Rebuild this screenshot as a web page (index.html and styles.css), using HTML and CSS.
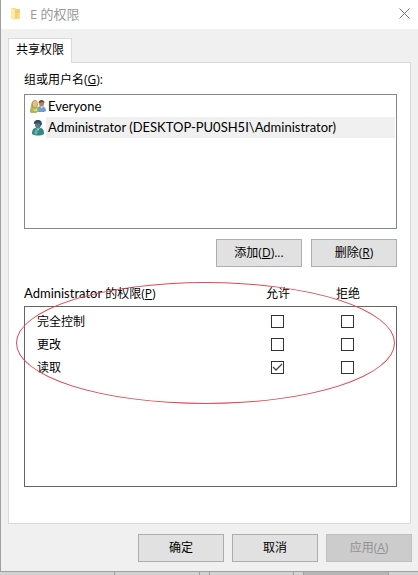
FILE: index.html
```html
<!DOCTYPE html>
<html lang="zh-CN">
<head>
    <meta charset="UTF-8">
    <meta name="viewport" content="width=device-width, initial-scale=1.0">
    <title>E 的权限</title>
    <link rel="stylesheet" href="styles.css">
</head>
<body>
    <main class="dialog">
        <header class="titlebar">
            <svg class="folder-icon" viewBox="0 0 10 13" aria-hidden="true">
                <path d="M0 1h4l1 1h4v10H0z" fill="#f3ce72"/>
                <path d="M0 1l4 1v11l-4-1z" fill="#ffe9a6"/>
                <path d="M7 6l2 1v5H6z" fill="#f8dc8e"/>
            </svg>
            <h1 class="title">E 的权限</h1>
            <button class="close" type="button" aria-label="关闭">
                <svg viewBox="0 0 11 11" aria-hidden="true">
                    <path d="M.5.5l10 10M10.5.5l-10 10" fill="none" stroke="#777"/>
                </svg>
            </button>
        </header>

        <div class="content">
            <div class="tabs" role="tablist">
                <button class="tab" type="button" role="tab" aria-selected="true">共享权限</button>
            </div>

            <section class="panel" role="tabpanel">
                <h2 class="label" id="users-label">组或用户名(<u>G</u>):</h2>
                <ul class="users" role="listbox" aria-labelledby="users-label">
                    <li class="user" role="option" aria-selected="false">
                        <svg class="user-icon" viewBox="0 0 16 16" aria-hidden="true">
                            <path d="M7 13c0-4 1-6 4-6s5 2 5 5l-2 1z" fill="#6f9fce"/>
                            <path d="M10 7h3l-1 3z" fill="#dcebf5"/>
                            <ellipse cx="11.5" cy="4.5" rx="2.5" ry="3" fill="#b88262"/>
                            <path d="M8.500 4c0-4 6-4 6 0l-2-1z" fill="#66493a"/>
                            <path d="M0 13c0-4 1-6 4-6s5 2 5 5l-3 2-5 0z" fill="#a9b957"/>
                            <path d="M1 8c0-9 7-9 7-2l-1 3H2z" fill="#c4a04c"/>
                            <ellipse cx="5" cy="5" rx="2" ry="3" fill="#e7bd93"/>
                            <path d="M3 9l2 2 2-2v3H4z" fill="#dbe1a0"/>
                        </svg>
                        <span class="user-name latin">Everyone</span>
                    </li>
                    <li class="user selected" role="option" aria-selected="true">
                        <svg class="user-icon" viewBox="0 0 16 16" aria-hidden="true">
                            <path d="M2 14c0-4 1-6 4-6h4c3 0 4 2 4 6-3 2-9 2-12 0z" fill="#2e8b86"/>
                            <path d="M4 13l2-4 2 3-2 3z" fill="#65b4ac"/>
                            <path d="M6 8h4l-2 3z" fill="#9fcfcb"/>
                            <ellipse cx="8" cy="4.500" rx="3" ry="4" fill="#587c87"/>
                            <path d="M4 4c-1-5 8-6 8 0l-1 2-2-3z" fill="#344f5b"/>
                        </svg>
                        <span class="user-name latin">Administrator (DESKTOP-PU0SH5I\Administrator)</span>
                    </li>
                </ul>

                <div class="actions">
                    <button class="btn" type="button">添加(<u>D</u>)...</button>
                    <button class="btn" type="button">删除(<u>R</u>)</button>
                </div>

                <div class="permissions">
                    <table class="permission-table">
                        <thead>
                            <tr>
                                <th scope="col"><span class="latin">Administrator</span> 的权限(<u>P</u>)</th>
                                <th scope="col">允许</th>
                                <th scope="col">拒绝</th>
                            </tr>
                        </thead>
                        <tbody>
                            <tr>
                                <th scope="row">完全控制</th>
                                <td><input class="check" type="checkbox" aria-label="完全控制 允许"></td>
                                <td><input class="check" type="checkbox" aria-label="完全控制 拒绝"></td>
                            </tr>
                            <tr>
                                <th scope="row">更改</th>
                                <td><input class="check" type="checkbox" aria-label="更改 允许"></td>
                                <td><input class="check" type="checkbox" aria-label="更改 拒绝"></td>
                            </tr>
                            <tr>
                                <th scope="row">读取</th>
                                <td><input class="check" type="checkbox" aria-label="读取 允许" checked></td>
                                <td><input class="check" type="checkbox" aria-label="读取 拒绝"></td>
                            </tr>
                        </tbody>
                    </table>
                    <div class="highlight" aria-hidden="true"></div>
                </div>
            </section>
        </div>

        <footer class="footer">
            <button class="btn" type="button">确定</button>
            <button class="btn" type="button">取消</button>
            <button class="btn" type="button" disabled>应用(<u>A</u>)</button>
        </footer>
    </main>

    <!-- top edge of the window behind the dialog -->
    <div class="behind" aria-hidden="true">
        <span></span>
        <span></span>
        <span class="dark"></span>
    </div>
</body>
</html>
```

FILE: styles.css
```css
* {
    box-sizing: border-box;
}
body {
    display: flex;
    flex-direction: column;
    min-height: 100vh;
    margin: 0;
    background: #d2d2d2;
    color: #000;
    font: 12px/16px "Open Sans", "Noto Sans CJK SC", sans-serif;
}
button {
    font: inherit;
    color: inherit;
}
h1, h2, ul {
    margin: 0;
    padding: 0;
    font: inherit;
    list-style: none;
}
.dialog {
    flex: 1;
    display: flex;
    flex-direction: column;
    background: #f0f0f0;
    border-left: 1px solid #a0a0a0;
    border-bottom: 1px solid #a0a0a0;
}

.titlebar {
    display: flex;
    align-items: center;
    height: 29px;
    padding: 0 8px 2px 10px;
    background: #fff;
    color: #999;
}
.folder-icon {
    width: 10px;
    height: 13px;
}
.title {
    flex: 1;
    margin-left: 9px;
    font-size: 13px;
}
.close {
    display: flex;
    padding: 0;
    border: 0;
    background: none;
}
.close svg {
    width: 11px;
    height: 11px;
}

.content {
    flex: 1;
    display: flex;
    flex-direction: column;
    padding: 9px 7px 0;
}
.tabs {
    display: flex;
}
.tab {
    height: 25px;
    margin-bottom: -1px;
    padding: 0 7px 2px;
    border: 1px solid #d9d9d9;
    border-bottom: 0;
    background: #fff;
    z-index: 1;
}
.panel {
    flex: 1;
    padding: 9px 13px 35px 15px;
    border: 1px solid #d9d9d9;
    background: #fff;
}
.label {
    margin-bottom: 6px;
}

.users {
    height: 135px;
    padding: 1px;
    border: 1px solid #828790;
}
.user {
    display: flex;
    align-items: center;
    height: 21px;
    padding-left: 4px;
}
.user-icon {
    width: 16px;
    height: 16px;
}
.user-name {
    flex: 1;
    padding-left: 2px;
    line-height: 21px;
}
.selected .user-name {
    background: #f0f0f0;
}
.latin {
    font-family: Lato, "Open Sans", sans-serif;
    font-size: 13px;
}

.actions {
    display: flex;
    justify-content: flex-end;
    gap: 9px;
    margin-top: 10px;
}
.btn {
    width: 86px;
    height: 28px;
    padding: 0;
    border: 1px solid #adadad;
    background: #e1e1e1;
}
.btn:disabled {
    background: #ccc;
    border-color: #bfbfbf;
    color: #929292;
}

.permissions {
    position: relative;
    margin-top: 18px;
}
.permission-table,
.permission-table thead,
.permission-table tbody {
    display: block;
}
.permission-table tr {
    display: grid;
    grid-template-columns: 1fr 70px 70px;
    align-items: center;
}
.permission-table th,
.permission-table td {
    padding: 0;
    font-weight: normal;
    text-align: center;
}
.permission-table th:first-child {
    text-align: left;
}
.permission-table thead {
    padding-right: 14px;
    margin-bottom: 4px;
}
.permission-table tbody {
    height: 181px;
    padding: 3px 14px 0 12px;
    border: 1px solid #646464;
}
.permission-table tbody tr {
    height: 23px;
}
.permission-table td {
    display: flex;
    justify-content: center;
}
.check {
    appearance: none;
    width: 13px;
    height: 13px;
    margin: 0;
    border: 1px solid #333;
    background: #fff;
}
.check:checked {
    background: #fff url("data:image/svg+xml,%3Csvg xmlns='http://www.w3.org/2000/svg' viewBox='0 0 11 11'%3E%3Cpath d='M1 5l3 3 6-6' fill='none' stroke='%23444' stroke-width='1.3'/%3E%3C/svg%3E");
}
/* ellipse marker around the permission rows */
.highlight {
    position: absolute;
    top: -3px;
    left: -8px;
    right: 2px;
    height: 122px;
    border: 1px solid #e04a55;
    border-radius: 50%;
    pointer-events: none;
}

.footer {
    display: flex;
    justify-content: flex-end;
    gap: 8px;
    padding: 10px 6px 9px;
}

.behind {
    display: flex;
    gap: 9px;
    height: 3px;
    padding: 0 29px 0 114px;
}
.behind span {
    flex: 1;
    border: solid #a0a0a0;
    border-width: 0 1px;
}
.behind .dark {
    background: #b5b5b5;
}
```
